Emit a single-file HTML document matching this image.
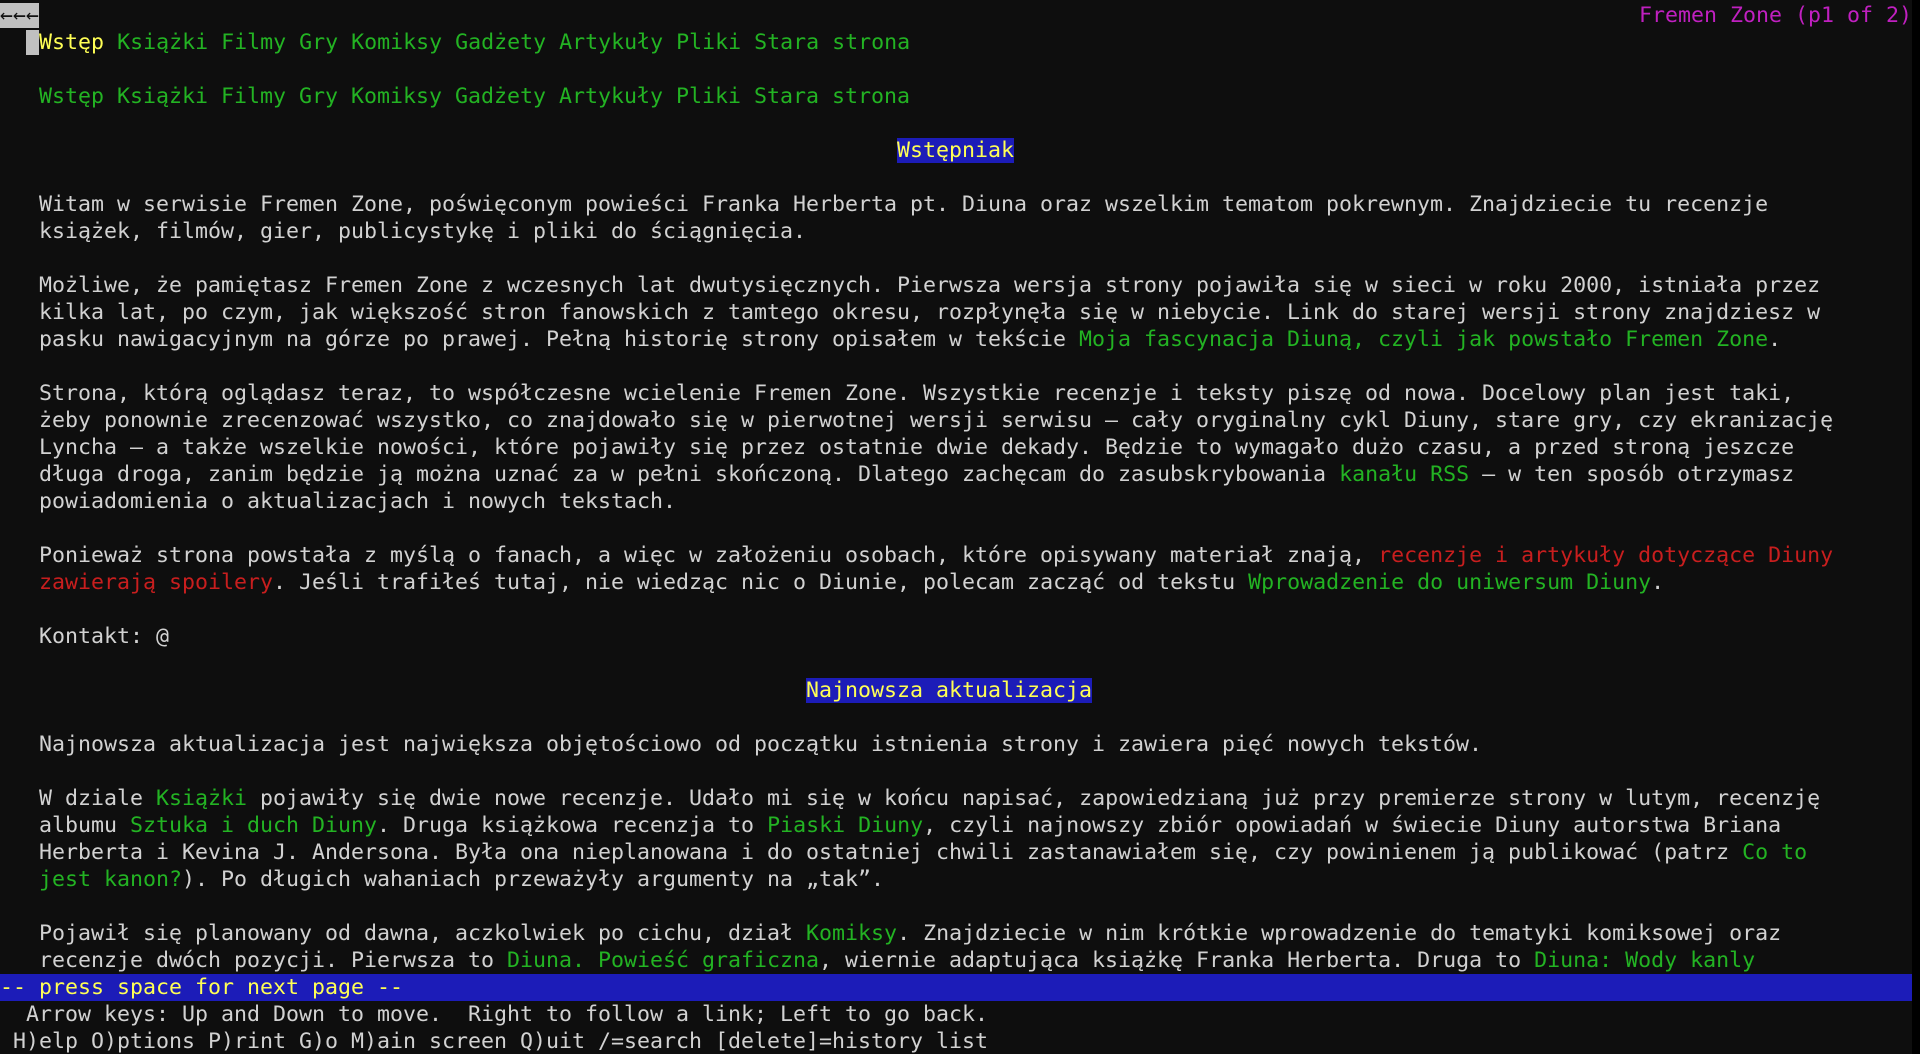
<!DOCTYPE html>
<html><head><meta charset="utf-8">
<style>
html,body{margin:0;padding:0;background:#000;width:1920px;height:1054px;overflow:hidden}
#t{position:absolute;left:0;top:0;width:1912px;height:1054px;background:#0e0e0e;overflow:hidden}
pre{margin:0;padding-top:2px;font-family:"DejaVu Sans Mono","Liberation Mono",monospace;font-size:21.6px;line-height:27px;color:#d2d2d2;white-space:pre}
.g{color:#23b323}.r{color:#c81e1e}.y{color:#ffff55}.m{color:#c020c0}
.hb{background:#1c1cb8;color:#ffff55}
.cur{background:#c0c0c0;color:#111}
.bar{display:inline-block;width:1912px;background:#1c1cb8;color:#ffff55}
.title{position:absolute;right:0px;top:2px;font-family:"DejaVu Sans Mono","Liberation Mono",monospace;font-size:21.6px;line-height:27px;color:#c020c0;white-space:pre}
.in{padding-left:1px}
</style></head><body><div id="t"><div class="title">Fremen Zone (p1 of 2)</div><pre><span class="cur">←←←</span>
  <span class="cur"> </span><span class="y">Wstęp</span> <span class="g">Książki Filmy Gry Komiksy Gadżety Artykuły Pliki Stara strona</span>

   <span class="g">Wstęp Książki Filmy Gry Komiksy Gadżety Artykuły Pliki Stara strona</span>

                                                                     <span class="hb">Wstępniak</span>

   Witam w serwisie Fremen Zone, poświęconym powieści Franka Herberta pt. Diuna oraz wszelkim tematom pokrewnym. Znajdziecie tu recenzje
   książek, filmów, gier, publicystykę i pliki do ściągnięcia.

   Możliwe, że pamiętasz Fremen Zone z wczesnych lat dwutysięcznych. Pierwsza wersja strony pojawiła się w sieci w roku 2000, istniała przez
   kilka lat, po czym, jak większość stron fanowskich z tamtego okresu, rozpłynęła się w niebycie. Link do starej wersji strony znajdziesz w
   pasku nawigacyjnym na górze po prawej. Pełną historię strony opisałem w tekście <span class="g">Moja fascynacja Diuną, czyli jak powstało Fremen Zone</span>.

   Strona, którą oglądasz teraz, to współczesne wcielenie Fremen Zone. Wszystkie recenzje i teksty piszę od nowa. Docelowy plan jest taki,
   żeby ponownie zrecenzować wszystko, co znajdowało się w pierwotnej wersji serwisu — cały oryginalny cykl Diuny, stare gry, czy ekranizację
   Lyncha — a także wszelkie nowości, które pojawiły się przez ostatnie dwie dekady. Będzie to wymagało dużo czasu, a przed stroną jeszcze
   długa droga, zanim będzie ją można uznać za w pełni skończoną. Dlatego zachęcam do zasubskrybowania <span class="g">kanału RSS</span> — w ten sposób otrzymasz
   powiadomienia o aktualizacjach i nowych tekstach.

   Ponieważ strona powstała z myślą o fanach, a więc w założeniu osobach, które opisywany materiał znają, <span class="r">recenzje i artykuły dotyczące Diuny</span>
   <span class="r">zawierają spoilery</span>. Jeśli trafiłeś tutaj, nie wiedząc nic o Diunie, polecam zacząć od tekstu <span class="g">Wprowadzenie do uniwersum Diuny</span>.

   Kontakt: @

                                                              <span class="hb">Najnowsza aktualizacja</span>

   Najnowsza aktualizacja jest największa objętościowo od początku istnienia strony i zawiera pięć nowych tekstów.

   W dziale <span class="g">Książki</span> pojawiły się dwie nowe recenzje. Udało mi się w końcu napisać, zapowiedzianą już przy premierze strony w lutym, recenzję
   albumu <span class="g">Sztuka i duch Diuny</span>. Druga książkowa recenzja to <span class="g">Piaski Diuny</span>, czyli najnowszy zbiór opowiadań w świecie Diuny autorstwa Briana
   Herberta i Kevina J. Andersona. Była ona nieplanowana i do ostatniej chwili zastanawiałem się, czy powinienem ją publikować (patrz <span class="g">Co to</span>
   <span class="g">jest kanon?</span>). Po długich wahaniach przeważyły argumenty na „tak”.

   Pojawił się planowany od dawna, aczkolwiek po cichu, dział <span class="g">Komiksy</span>. Znajdziecie w nim krótkie wprowadzenie do tematyki komiksowej oraz
   recenzje dwóch pozycji. Pierwsza to <span class="g">Diuna. Powieść graficzna</span>, wiernie adaptująca książkę Franka Herberta. Druga to <span class="g">Diuna: Wody kanly</span>
<span class="bar">-- press space for next page --</span>
  Arrow keys: Up and Down to move.  Right to follow a link; Left to go back.
 H)elp O)ptions P)rint G)o M)ain screen Q)uit /=search [delete]=history list</pre></div></body></html>
